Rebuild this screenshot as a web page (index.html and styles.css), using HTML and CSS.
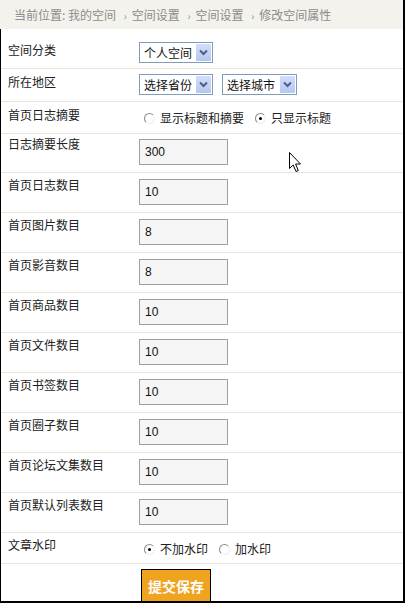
FILE: index.html
```html
<!DOCTYPE html>
<html lang="zh-CN">
  <head>
    <meta charset="UTF-8" />
    <meta name="viewport" content="width=device-width, initial-scale=1.0" />
    <title>修改空间属性</title>
    <link rel="stylesheet" href="styles.css">
  </head>
  <body>
    <div class="page">
      <div class="crumb">当前位置: 我的空间 <span class="sep">›</span>空间设置 <span class="sep">›</span>空间设置 <span class="sep">›</span>修改空间属性</div>

      <form class="form">
        <div class="row r-first">
          <div class="label">空间分类</div>
          <div class="field">
            <span class="select w74"><span class="select-text">个人空间</span><span class="arrow"><svg width="9" height="7" viewBox="0 0 9 7"><path d="M1 1.5 L4.5 5 L8 1.5" fill="none" stroke="#4d6185" stroke-width="2"/></svg></span></span>
          </div>
        </div>

        <div class="row r-select">
          <div class="label">所在地区</div>
          <div class="field">
            <span class="select w74"><span class="select-text">选择省份</span><span class="arrow"><svg width="9" height="7" viewBox="0 0 9 7"><path d="M1 1.5 L4.5 5 L8 1.5" fill="none" stroke="#4d6185" stroke-width="2"/></svg></span></span>
            <span class="select w75"><span class="select-text">选择城市</span><span class="arrow"><svg width="9" height="7" viewBox="0 0 9 7"><path d="M1 1.5 L4.5 5 L8 1.5" fill="none" stroke="#4d6185" stroke-width="2"/></svg></span></span>
          </div>
        </div>

        <div class="row r-radio">
          <div class="label">首页日志摘要</div>
          <div class="field radios">
            <span class="opt"><span class="radio"></span>显示标题和摘要</span>
            <span class="opt"><span class="radio checked"></span>只显示标题</span>
          </div>
        </div>

        <div class="row r-len">
          <div class="label">日志摘要长度</div>
          <div class="field"><input class="text" type="text" value="300" /></div>
        </div>

        <div class="row">
          <div class="label">首页日志数目</div>
          <div class="field"><input class="text" type="text" value="10" /></div>
        </div>
        <div class="row">
          <div class="label">首页图片数目</div>
          <div class="field"><input class="text" type="text" value="8" /></div>
        </div>
        <div class="row">
          <div class="label">首页影音数目</div>
          <div class="field"><input class="text" type="text" value="8" /></div>
        </div>
        <div class="row">
          <div class="label">首页商品数目</div>
          <div class="field"><input class="text" type="text" value="10" /></div>
        </div>
        <div class="row">
          <div class="label">首页文件数目</div>
          <div class="field"><input class="text" type="text" value="10" /></div>
        </div>
        <div class="row">
          <div class="label">首页书签数目</div>
          <div class="field"><input class="text" type="text" value="10" /></div>
        </div>
        <div class="row">
          <div class="label">首页圈子数目</div>
          <div class="field"><input class="text" type="text" value="10" /></div>
        </div>
        <div class="row">
          <div class="label">首页论坛文集数目</div>
          <div class="field"><input class="text" type="text" value="10" /></div>
        </div>
        <div class="row">
          <div class="label">首页默认列表数目</div>
          <div class="field"><input class="text" type="text" value="10" /></div>
        </div>

        <div class="row r-mark">
          <div class="label">文章水印</div>
          <div class="field radios">
            <span class="opt"><span class="radio checked"></span>不加水印</span>
            <span class="opt"><span class="radio"></span>加水印</span>
          </div>
        </div>

        <div class="row r-submit">
          <div class="label"></div>
          <div class="field"><button type="submit" class="save">提交保存</button></div>
        </div>
      </form>

      <svg class="cursor" width="13" height="21" viewBox="0 0 13 21">
        <path d="M0.5 0.5 L0.5 16.5 L4.2 13 L7 19.5 L9.3 18.5 L6.6 12 L11.5 12 Z" fill="#fff" stroke="#000" stroke-width="1" stroke-linejoin="miter"/>
      </svg>
    </div>
  </body>
</html>
```

FILE: styles.css
```css
body {
  margin: 0;
  padding: 0;
  background-color: #ffffff;
  font-family: "Noto Sans CJK SC", "Liberation Sans", sans-serif;
  font-size: 12px;
  color: #222;
}

.page {
  position: relative;
  width: 405px;
  height: 603px;
  box-sizing: border-box;
  border-right: 2px solid #000;
  border-bottom: 2px solid #000;
  overflow: hidden;
}

.crumb {
  height: 29px;
  line-height: 29px;
  padding-left: 14px;
  background-color: #f4f2ec;
  color: #8c8c8c;
  font-size: 12px;
  white-space: nowrap;
}

.crumb .sep {
  font-size: 10px;
  margin: 0 5px 0 5px;
}

.form {
  border-left: 1px solid #000;
  margin: 0;
}

.row {
  display: flex;
  box-sizing: border-box;
  height: 40px;
  border-top: 1px solid #e8e5da;
}

.label {
  width: 131px;
  padding-left: 7px;
  padding-top: 5px;
  line-height: 14px;
  white-space: nowrap;
}

.field {
  display: flex;
  align-items: flex-start;
  margin-top: 6px;
}

.r-first {
  height: 39px;
  border-top: none;
}
.r-first .label { padding-top: 14px; }
.r-first .field { margin-top: 13px; }

.r-select { height: 33px; }
.r-select .label { padding-top: 6px; }
.r-select .field { margin-top: 5px; gap: 9px; }

.r-radio { height: 32px; }
.r-radio .label { padding-top: 6px; }
.r-radio .field { margin-top: 9px; }

.r-len { height: 39px; }
.r-len .label { padding-top: 3px; }
.r-len .field { margin-top: 5px; }

.r-mark { height: 31px; }
.r-mark .label { padding-top: 5px; }
.r-mark .field { margin-top: 9px; }

.r-submit { height: 38px; }
.r-submit .field { margin-top: 5px; }

/* old style select box */
.select {
  display: flex;
  align-items: center;
  justify-content: space-between;
  box-sizing: border-box;
  height: 21px;
  border: 1px solid #7f9db9;
  background-color: #fff;
  padding: 0 1px 0 4px;
  font-size: 12px;
  color: #111;
}
.w74 { width: 74px; }
.w75 { width: 75px; }

.arrow {
  display: flex;
  align-items: center;
  justify-content: center;
  width: 15px;
  height: 17px;
  background: linear-gradient(#d3defa, #b4c6f1);
  border-radius: 1px;
}

.radios {
  line-height: 14px;
}

.opt {
  display: flex;
  align-items: center;
  margin-left: 5px;
  margin-right: 6px;
}

.radio {
  position: relative;
  width: 11px;
  height: 11px;
  box-sizing: border-box;
  margin-right: 5px;
  border-radius: 50%;
  border: 1px solid;
  border-color: #8a8a8a #eeeeee #eeeeee #8a8a8a;
  background-color: #fff;
}

.radio.checked::after {
  content: "";
  position: absolute;
  left: 3px;
  top: 3px;
  width: 3px;
  height: 3px;
  background-color: #000;
  border-radius: 50%;
}

.text {
  box-sizing: border-box;
  width: 89px;
  height: 26px;
  margin: 0;
  padding: 0 5px;
  border: 1px solid #a0a0a0;
  background-color: #f5f5f5;
  font-family: "Liberation Sans", Arial, sans-serif;
  font-size: 12px;
  color: #111;
}

.save {
  box-sizing: border-box;
  width: 70px;
  height: 33px;
  margin: 0 0 0 2px;
  padding: 0;
  border: 1px solid #000;
  background-color: #f0a31f;
  color: #fff;
  font-family: "Noto Sans CJK SC", sans-serif;
  font-size: 14px;
  font-weight: bold;
  cursor: pointer;
}

.cursor {
  position: absolute;
  left: 289px;
  top: 152px;
}
```
